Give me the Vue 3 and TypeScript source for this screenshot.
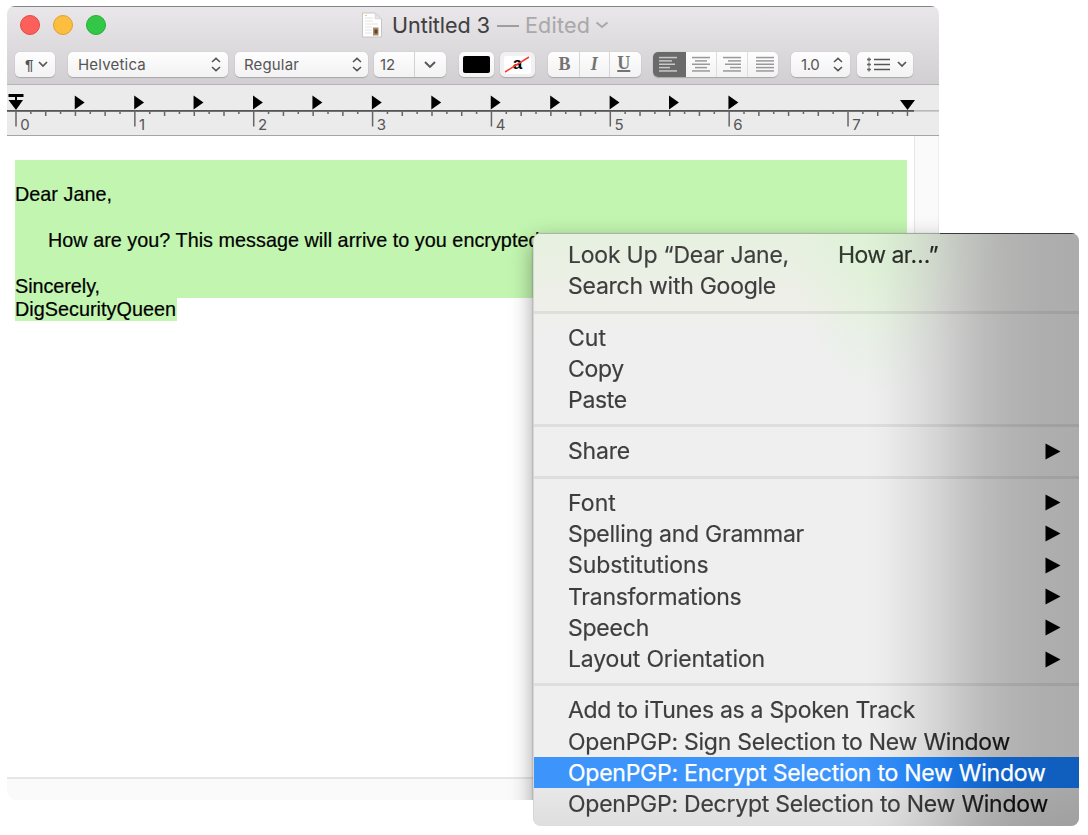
<script setup lang="ts">
interface Entry {
  label: string
  width: number
  tail?: string
  tailWidth?: number
  sub?: boolean
  active?: boolean
}

const groups: Entry[][] = [
  [
    { label: 'Look Up “Dear Jane,', width: 221, tail: 'How ar…”', tailWidth: 100 },
    { label: 'Search with Google', width: 208 },
  ],
  [
    { label: 'Cut', width: 38 },
    { label: 'Copy', width: 56 },
    { label: 'Paste', width: 59 },
  ],
  [{ label: 'Share', width: 62, sub: true }],
  [
    { label: 'Font', width: 48, sub: true },
    { label: 'Spelling and Grammar', width: 236, sub: true },
    { label: 'Substitutions', width: 140.5, sub: true },
    { label: 'Transformations', width: 173.5, sub: true },
    { label: 'Speech', width: 81, sub: true },
    { label: 'Layout Orientation', width: 197, sub: true },
  ],
  [
    { label: 'Add to iTunes as a Spoken Track', width: 347 },
    { label: 'OpenPGP: Sign Selection to New Window', width: 442 },
    { label: 'OpenPGP: Encrypt Selection to New Window', width: 477.5, active: true },
    { label: 'OpenPGP: Decrypt Selection to New Window', width: 480 },
  ],
]

// Spreads the letters of a label evenly over a given width.
const vTrack = {
  mounted(el: HTMLElement, binding: { value: number }) {
    const count = (el.textContent ?? '').length
    const natural = el.getBoundingClientRect().width
    el.style.letterSpacing = `${(binding.value - natural) / count}px`
  },
}

const inch = 118.86
const ticks = Array.from({ length: 61 }, (_, i) => ({
  x: 9 + (i * inch) / 8,
  len: i % 8 === 0 && i < 60 ? 16 : i % 2 === 0 ? 5.5 : 3.5,
}))
const tabs = Array.from({ length: 12 }, (_, i) => 9 + ((i + 1) * inch) / 2)
const numbers = Array.from({ length: 8 }, (_, i) => ({ n: i, x: 13.2 + i * inch }))
const aligns = [
  [[0, 18], [0, 13], [0, 16], [0, 11], [0, 18]],
  [[0, 18], [3, 12], [0, 18], [3, 12], [0, 18]],
  [[0, 18], [5, 13], [2, 16], [7, 11], [0, 18]],
  [[0, 18], [0, 18], [0, 18], [0, 18], [0, 18]],
]
</script>

<template>
  <main class="stage">
    <section class="window">
      <header class="head">
        <div class="titlebar">
          <div class="lights"><i class="red" /><i class="amber" /><i class="green" /></div>
          <div class="title">
            <svg class="doc" width="22" height="26" viewBox="0 0 22 26">
              <path d="M1.500 1H14l6.500 6v18h-19z" fill="#fff" stroke="#bbb" stroke-width=".8" />
              <path d="M14 1v6h6.500z" fill="#e4e4e4" stroke="#ccc" stroke-width=".5" />
              <path d="M4 6h8M4 9h8M4 12h13M4 15h7M4 18h7M4 21h7" stroke="#e2e2e2" stroke-width="1" />
              <path d="M4 3.500h2" stroke="#edc08e" />
              <rect x="12" y="15.500" width="5.500" height="8" fill="#ab8a64" />
              <path d="M13.500 17.500h3v4h-3z" fill="#5c4636" />
            </svg>
            <span v-track="98" class="name">Untitled 3</span>
            <i class="dash" />
            <span v-track="65" class="edited">Edited</span>
            <svg class="tchev" width="14" height="8" viewBox="0 0 14 8"><path d="M1.500 1.500 7 6l5.500-4.500" fill="none" stroke="#aaa8aa" stroke-width="2" /></svg>
          </div>
        </div>
        <div class="tools">
          <div class="ctl para">
            <span>¶</span>
            <svg width="10" height="7" viewBox="0 0 10 7"><path d="m1 1 4 4 4-4" fill="none" stroke="#555" stroke-width="1.700" /></svg>
          </div>
          <div class="ctl family">
            <span v-track="68">Helvetica</span>
            <svg width="10" height="15" viewBox="0 0 10 15"><path d="m1 5 4-3.700L9 5M1 10l4 3.700L9 10" fill="none" stroke="#555" stroke-width="1.600" /></svg>
          </div>
          <div class="ctl face">
            <span v-track="55">Regular</span>
            <svg width="10" height="15" viewBox="0 0 10 15"><path d="m1 5 4-3.700L9 5M1 10l4 3.700L9 10" fill="none" stroke="#555" stroke-width="1.600" /></svg>
          </div>
          <div class="ctl size">
            <span class="num">12</span>
            <span class="drop"><svg width="12" height="8" viewBox="0 0 12 8"><path d="m1 1 5 5 5-5" fill="none" stroke="#555" stroke-width="1.900" /></svg></span>
          </div>
          <div class="ctl ink"><i /></div>
          <div class="ctl fill">
            <span>a</span>
            <svg width="26" height="17" viewBox="0 0 26 17"><path d="M1 16 25 1" stroke="#fc3a2f" stroke-width="1.500" /></svg>
          </div>
          <div class="ctl style"><b>B</b><em>I</em><u>U</u></div>
          <div class="ctl align">
            <span v-for="(rows, i) in aligns" :key="i" :class="{ on: i === 0 }">
              <svg width="18" height="17" viewBox="0 0 18 17">
                <rect v-for="(r, j) in rows" :key="j" :x="r[0]" :y="j * 3.35 + 0.8" :width="r[1]" height="1.500" />
              </svg>
            </span>
          </div>
          <div class="ctl spacing">
            <span>1.0</span>
            <svg width="10" height="15" viewBox="0 0 10 15"><path d="m1 5 4-3.700L9 5M1 10l4 3.700L9 10" fill="none" stroke="#555" stroke-width="1.600" /></svg>
          </div>
          <div class="ctl list">
            <svg width="24" height="15" viewBox="0 0 24 15">
              <path d="M7 2.500h16M7 7.500h16M7 12.500h16" stroke="#555" stroke-width="1.600" />
              <path d="M0 2.500h4M0 7.500h4M0 12.500h4M2 .5v4M2 5.500v4M2 10.500v4" stroke="#666" stroke-width="1.300" />
            </svg>
            <svg width="10" height="7" viewBox="0 0 10 7"><path d="m1 1 4 4 4-4" fill="none" stroke="#555" stroke-width="1.700" /></svg>
          </div>
        </div>
      </header>

      <svg class="ruler" width="932" height="51" viewBox="0 0 932 51">
        <path d="M0 25.900h932" stroke="#999" stroke-width="1" />
        <path d="M0 25.900h907" stroke="#555" stroke-width="1.600" />
        <path v-for="(t, i) in ticks" :key="i" :d="`M${t.x} 25.500v${t.len}`" stroke="#666" stroke-width="1.500" />
        <path v-for="x in tabs" :key="x" :d="`M${x - 0.7} 10.500l9.900 7-9.900 7z`" fill="#000" />
        <path d="M1.500 9h15v3H10v3h6L9 25 1.500 15H8v-3H1.500z" fill="#000" />
        <path d="M893 15h15l-7.500 10z" fill="#000" />
        <path d="M0 50.500h932" stroke="#a5a5a5" />
        <text v-for="t in numbers" :key="t.n" :x="t.x" y="44.800">{{ t.n }}</text>
      </svg>

      <div class="body">
        <article class="page">
          <div class="selected">
            <p>&nbsp;</p>
            <p><span v-track="97">Dear Jane,</span></p>
            <p>&nbsp;</p>
            <p class="indent"><span v-track="497">How are you? This message will arrive to you encrypted!</span></p>
            <p>&nbsp;</p>
            <p><span v-track="85">Sincerely,</span></p>
          </div>
          <p class="last"><span v-track="161">DigSecurityQueen</span></p>
        </article>
        <aside class="scroller" />
      </div>
      <footer class="foot" />
      <div class="menu-shadow" />
    </section>

    <nav class="menu">
      <div v-for="(g, i) in groups" :key="i" class="group">
        <div v-for="e in g" :key="e.label" class="item" :class="{ active: e.active }">
          <span class="label"><span v-track="e.width">{{ e.label }}</span></span>
          <span v-if="e.tail" class="tail"><span v-track="e.tailWidth">{{ e.tail }}</span></span>
          <svg v-if="e.sub" class="arrow" width="16" height="17" viewBox="0 0 16 17"><path d="M.5.500 15.500 8.500.5 16.500z" /></svg>
        </div>
      </div>
    </nav>
  </main>
</template>

<style>
body { background: #fff; }
</style>

<style scoped>
.stage { position: relative; width: 1088px; height: 835px; overflow: hidden; background: #fff; font-family: Inter, Roboto, sans-serif; box-sizing: border-box; padding: 6px 0 0 7px; }
.stage * { box-sizing: border-box; }
.window { position: relative; width: 932px; height: 794px; overflow: hidden; border-radius: 8px 8px 9px 9px; display: flex; flex-direction: column; background: #fff; }
.head { height: 79px; flex: none; background: linear-gradient(#e9e7e9, #d1cfd1); border-top: 1px solid #858585; border-bottom: 1px solid #b5b3b5; }
.titlebar { height: 38px; display: flex; align-items: center; }
.lights { display: flex; gap: 13px; padding: 0 0 2px 13px; width: 354px; }
.lights i { width: 20px; height: 20px; border-radius: 50%; border: 1px solid; }
.red { background: #fd605b; border-color: #e14a46 !important; }
.amber { background: #fdbd3f; border-color: #dfa032 !important; }
.green { background: #33c748; border-color: #26ac36 !important; }
.title { display: flex; align-items: center; font-size: 21.500px; color: #403f41; white-space: nowrap; -webkit-text-stroke: .1px; }
.doc { margin: -3px 9px 0 0; }
.title span { display: inline-block; margin-top: -2px; flex: none; }
.dash { width: 22px; height: 2px; background: #9f9da0; margin: 0 6px 0 7px; }
.edited { color: #aaa8aa; }
.tchev { margin: -2px 0 0 5px; }
.tools { display: flex; padding: 7px 0 0 8px; height: 33px; }
.ctl { height: 25px; flex: none; border-radius: 5px; background: linear-gradient(#fefefe, #f2f2f2); box-shadow: 0 1px 1px #a9a7a9, 0 0 1px #bbb; display: flex; align-items: center; font-size: 15px; color: #555; }
.ctl span { white-space: nowrap; }
.para { width: 40px; padding: 0 7px 0 10px; justify-content: space-between; margin-right: 13px; }
.para span { font-family: "Liberation Sans", sans-serif; font-weight: bold; font-size: 15px; }
.family { width: 160px; padding: 0 7px 0 10px; justify-content: space-between; margin-right: 7px; }
.face { width: 133px; padding: 0 6px 0 9px; justify-content: space-between; margin-right: 6px; }
.size { width: 72px; margin-right: 13px; }
.num { width: 41px; padding-left: 6px; line-height: 25px; border-right: 1px solid #d2d2d2; }
.drop { flex: 1; display: flex; justify-content: center; }
.drop svg { margin-right: 2px; }
.ink { width: 35px; justify-content: center; margin-right: 6px; }
.ink i { width: 27px; height: 17px; border-radius: 2px; background: #000; }
.fill { width: 35px; margin-right: 13px; position: relative; justify-content: center; background: #f1f1f1; }
.fill span { width: 27px; height: 18px; background: #fff; border-radius: 2px; text-align: center; color: #000; font: bold 17px/16px "Liberation Sans", sans-serif; }
.fill svg { position: absolute; left: 4px; top: 4px; }
.style { width: 93px; margin-right: 12px; font-family: "Liberation Serif", serif; font-size: 18px; color: #737373; }
.style > * { flex: 1; text-align: center; line-height: 25px; font-weight: bold; border-right: 1px solid #d6d6d6; height: 25px; }
.style > *:first-child { flex: 0 0 32px; padding-left: 2px; }
.style > *:last-child { border: 0; text-decoration-thickness: 1.500px; padding: 0 3px 0 0; line-height: 23px; }
.align { width: 125px; margin-right: 13px; overflow: hidden; }
.align span { width: 31px; height: 25px; display: flex; align-items: center; justify-content: center; border-right: 1px solid #ddd; fill: #999; }
.align span:last-child { border: 0; width: 30px; padding-left: 4px; }
.align .on { width: 33px; background: #6b6a6b; fill: #c9c9c9; border: 0; padding-right: 3px; }
.spacing { width: 59px; padding: 0 7px 0 10px; justify-content: space-between; margin-right: 7px; letter-spacing: -0.4px; }
.list { width: 56px; padding: 0 6px 0 10px; justify-content: space-between; }
.ruler { display: block; flex: none; background: #ebebeb; }
.ruler text { font: 15px Inter, sans-serif; fill: #555; }
.body { flex: 1; display: flex; }
.page { width: 907px; padding: 23.500px 0 0 8px; font: 19.800px/23px "Liberation Sans", Arial, sans-serif; color: #000; -webkit-text-stroke: .2px; }
.page p { margin: 0; height: 23px; white-space: nowrap; }
.page .indent { padding-left: 33px; }
.selected { width: 892px; background: #c2f5b0; }
.last { width: 162px; background: #c2f5b0; }
.scroller { width: 25px; background: #fafafa; border-left: 1px solid #e6e6e6; border-right: 1px solid #eee; }
.foot { height: 23px; flex: none; background: #fafafa; border-top: 2px solid #e6e6e6; }
.menu-shadow { position: absolute; left: 526px; top: 228px; width: 546px; height: 592px; border-radius: 8px; box-shadow: 0 7px 22px rgba(0, 0, 0, .38), 0 0 2px rgba(0, 0, 0, .4); }
.menu { position: absolute; left: 533px; top: 233px; width: 546px; height: 593px; padding: 6.500px 0; overflow: hidden; border-radius: 8px; border-left: 1px solid #d5d5d5;
  background:
    linear-gradient(to right, rgba(0, 0, 0, .25) 406px, #3a3a3a 406px) 0 0 / 100% 1px no-repeat,
    linear-gradient(to bottom, transparent 530px, rgba(0, 0, 0, .07) 592px),
    linear-gradient(to right, transparent 332px, rgba(174, 174, 174, .05) 350px, rgba(174, 174, 174, .2) 375px, rgba(174, 174, 174, .38) 400px, rgba(174, 174, 174, .6) 425px, rgba(174, 174, 174, .79) 450px, rgba(174, 174, 174, .91) 475px, #aeaeae 510px, #acacac),
    radial-gradient(ellipse 90px 150px at 350px 15px, rgba(218, 242, 210, .8), transparent),
    linear-gradient(#e6f1df, #efefea 75px, #efefef 100px);
}
.group + .group { margin-top: 8.500px; border-top: 3px solid rgba(0, 0, 0, .07); padding-top: 8.500px; }
.item { position: relative; display: flex; align-items: center; height: 31.280px; padding-left: 34px; font-size: 23px; line-height: 30px; color: #3d3d3d; white-space: pre; }
.label, .tail { display: block; background: linear-gradient(to right, #3d3d3d 330px, #0b0b0b 450px); -webkit-background-clip: text; background-clip: text; color: transparent; -webkit-text-stroke: .2px transparent; }
.tail { margin-left: 49px; background: linear-gradient(to right, #333d31, #222); -webkit-background-clip: text; background-clip: text; }
.active { background: linear-gradient(to right, #3d94fa 320px, #2080ef 390px, #1062c8 460px, #105dbc); }
.active .label { background: none; color: #fff; -webkit-text-stroke: .25px #fff; }
.arrow { margin-left: auto; margin-right: 18.500px; fill: #000; }
</style>
